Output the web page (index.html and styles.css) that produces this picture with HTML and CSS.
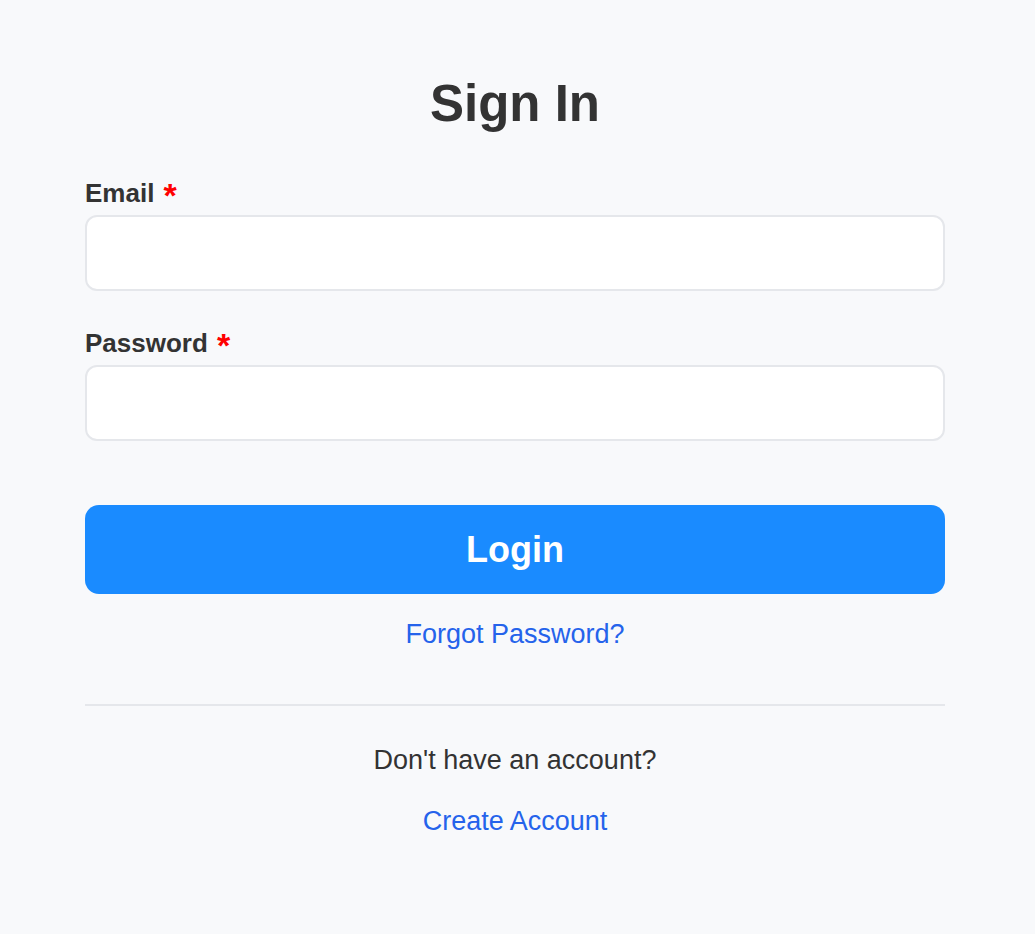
FILE: index.html
```html
<!DOCTYPE html>
<html lang="en">
<head>
<meta charset="utf-8">
<title>Sign In</title>
<link rel="stylesheet" href="styles.css">
</head>
<body>
<main class="signin">
  <h1 class="title">Sign In</h1>
  <form class="form">
    <div class="field">
      <label class="label" for="email">Email <span class="req">*</span></label>
      <input class="input" id="email" type="email">
    </div>
    <div class="field">
      <label class="label" for="password">Password <span class="req">*</span></label>
      <input class="input" id="password" type="password">
    </div>
    <button class="btn" type="button">Login</button>
    <a class="link forgot" href="#">Forgot Password?</a>
  </form>
  <hr class="divider">
  <p class="prompt">Don't have an account?</p>
  <a class="link create" href="#">Create Account</a>
</main>
</body>
</html>
```
FILE: styles.css
```css
html, body {
  margin: 0;
  padding: 0;
  background: #f8f9fb;
}
body {
  font-family: "Liberation Sans", Arial, sans-serif;
  color: #333333;
}
.signin {
  display: flex;
  flex-direction: column;
  align-items: stretch;
  padding: 75px 90px 0 85px;
}
.title {
  margin: 0;
  font-size: 51px;
  line-height: 58px;
  font-weight: 700;
  text-align: center;
  color: #333333;
}
.form {
  display: flex;
  flex-direction: column;
  margin-top: 45px;
}
.field {
  display: flex;
  flex-direction: column;
  gap: 7px;
}
.field + .field {
  margin-top: 37px;
}
.label {
  font-size: 26px;
  line-height: 30px;
  font-weight: 700;
  color: #333333;
}
.req {
  display: inline-block;
  margin-left: 2px;
  color: #ff0000;
  font-size: 34px;
  line-height: 0;
  vertical-align: -5px;
}
.input {
  box-sizing: border-box;
  height: 76px;
  width: 100%;
  margin: 0;
  border: 2px solid #e5e7eb;
  border-radius: 12px;
  background: #ffffff;
  font: inherit;
  font-size: 26px;
  padding: 0 20px;
}
.btn {
  margin-top: 64px;
  height: 89px;
  border: none;
  border-radius: 14px;
  background: #1a8bff;
  color: #ffffff;
  font-family: "Liberation Sans", Arial, sans-serif;
  font-size: 36px;
  font-weight: 700;
  cursor: pointer;
}
.link {
  align-self: center;
  font-size: 27px;
  line-height: 30px;
  color: #2563eb;
  text-decoration: none;
}
.forgot {
  margin-top: 25px;
}
.divider {
  margin: 55px 0 0 0;
  border: none;
  height: 2px;
  background: #e5e7eb;
}
.prompt {
  margin: 39px 0 0 0;
  font-size: 27px;
  line-height: 30px;
  text-align: center;
  color: #333333;
}
.create {
  margin-top: 31px;
}
```
